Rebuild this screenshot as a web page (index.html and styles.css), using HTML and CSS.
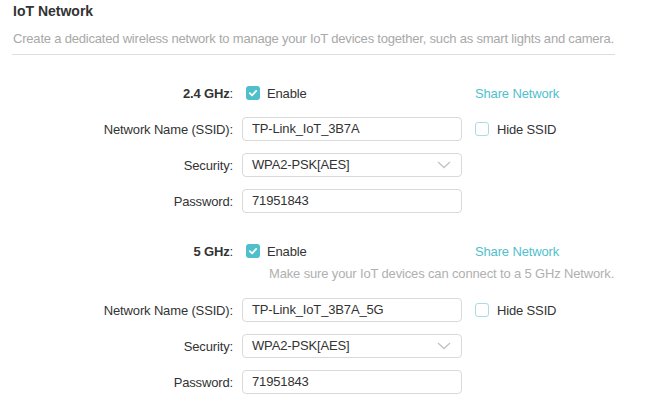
FILE: index.html
```html
<!DOCTYPE html>
<html lang="en">
<head>
<meta charset="utf-8">
<title>IoT Network</title>
<link rel="stylesheet" href="styles.css">
</head>
<body>
<div class="page">
  <h1 class="title">IoT Network</h1>
  <p class="desc">Create a dedicated wireless network to manage your IoT devices together, such as smart lights and camera.</p>

  <section class="band band-first">
    <div class="row">
      <div class="label"><b>2.4 GHz</b>:</div>
      <label class="check"><span class="box on"><svg viewBox="0 0 14 14" width="14" height="14"><path d="M3.8 7.2 L6.1 9.3 L10.2 4.9" fill="none" stroke="#fff" stroke-width="1.8" stroke-linecap="round" stroke-linejoin="round"/></svg></span>Enable</label>
      <a class="share">Share Network</a>
    </div>
    <div class="row">
      <div class="label">Network Name (SSID):</div>
      <div class="field">TP-Link_IoT_3B7A</div>
      <label class="check side"><span class="box"></span>Hide SSID</label>
    </div>
    <div class="row">
      <div class="label">Security:</div>
      <div class="field select">WPA2-PSK[AES]<svg class="chev" viewBox="0 0 14 8" width="14" height="8"><path d="M1 1 L7 6.5 L13 1" fill="none" stroke="#c4c4c4" stroke-width="1.4"/></svg></div>
    </div>
    <div class="row">
      <div class="label">Password:</div>
      <div class="field">71951843</div>
    </div>
  </section>

  <section class="band band-second">
    <div class="row">
      <div class="label"><b>5 GHz</b>:</div>
      <label class="check"><span class="box on"><svg viewBox="0 0 14 14" width="14" height="14"><path d="M3.8 7.2 L6.1 9.3 L10.2 4.9" fill="none" stroke="#fff" stroke-width="1.8" stroke-linecap="round" stroke-linejoin="round"/></svg></span>Enable</label>
      <a class="share">Share Network</a>
    </div>
    <div class="note">Make sure your IoT devices can connect to a 5 GHz Network.</div>
    <div class="row row-after-note">
      <div class="label">Network Name (SSID):</div>
      <div class="field">TP-Link_IoT_3B7A_5G</div>
      <label class="check side"><span class="box"></span>Hide SSID</label>
    </div>
    <div class="row">
      <div class="label">Security:</div>
      <div class="field select">WPA2-PSK[AES]<svg class="chev" viewBox="0 0 14 8" width="14" height="8"><path d="M1 1 L7 6.5 L13 1" fill="none" stroke="#c4c4c4" stroke-width="1.4"/></svg></div>
    </div>
    <div class="row">
      <div class="label">Password:</div>
      <div class="field">71951843</div>
    </div>
  </section>
</div>
</body>
</html>
```

FILE: styles.css
```css
html, body {
  margin: 0;
  padding: 0;
  background: #ffffff;
}

body {
  font-family: "Liberation Sans", Arial, sans-serif;
  font-size: 13px;
  letter-spacing: -0.15px;
  color: #333333;
}

.page {
  width: 603px;
  padding-left: 12px;
}

.title {
  margin: 0;
  font-size: 14px;
  font-weight: bold;
  line-height: 22px;
  letter-spacing: 0;
  color: #333333;
  padding-left: 1px;
}

.desc {
  margin: 8px 0 0 0;
  padding: 0 0 6px 1px;
  line-height: 18px;
  letter-spacing: -0.2px;
  color: #a8a8a8;
  border-bottom: 1px solid #dedede;
  white-space: nowrap;
}

.band-first {
  padding-top: 26px;
}

.band-second {
  padding-top: 14px;
}

.row {
  display: grid;
  grid-template-columns: 221px 220px auto;
  column-gap: 9px;
  align-items: center;
  height: 24px;
  margin-bottom: 12px;
}

.row > :nth-child(3) {
  margin-left: 4px;
}

.label {
  text-align: right;
  color: #333333;
  white-space: nowrap;
}

.label b {
  font-weight: bold;
  color: #333333;
}

.check {
  display: flex;
  align-items: center;
  gap: 7px;
  color: #333333;
  white-space: nowrap;
}

.row > .check:nth-child(2) {
  padding-left: 4px;
}

.check.side {
  gap: 8px;
}

.box {
  box-sizing: border-box;
  width: 14px;
  height: 14px;
  border: 1.5px solid #a9dde3;
  border-radius: 3px;
  display: flex;
  flex: none;
}

.box.on {
  background: #4fc0cb;
  border: none;
}

.share {
  color: #4fbfcc;
  white-space: nowrap;
}

.field {
  box-sizing: border-box;
  height: 24px;
  border: 1px solid #d9d9d9;
  border-radius: 4px;
  padding: 0 9px;
  line-height: 22px;
  color: #333333;
  display: flex;
  align-items: center;
  justify-content: space-between;
}

.chev {
  margin-right: 1px;
}

.note {
  margin: -10px 0 0 257px;
  line-height: 18px;
  color: #b0b0b0;
  white-space: nowrap;
}

.row-after-note {
  margin-top: 15px;
}
```
